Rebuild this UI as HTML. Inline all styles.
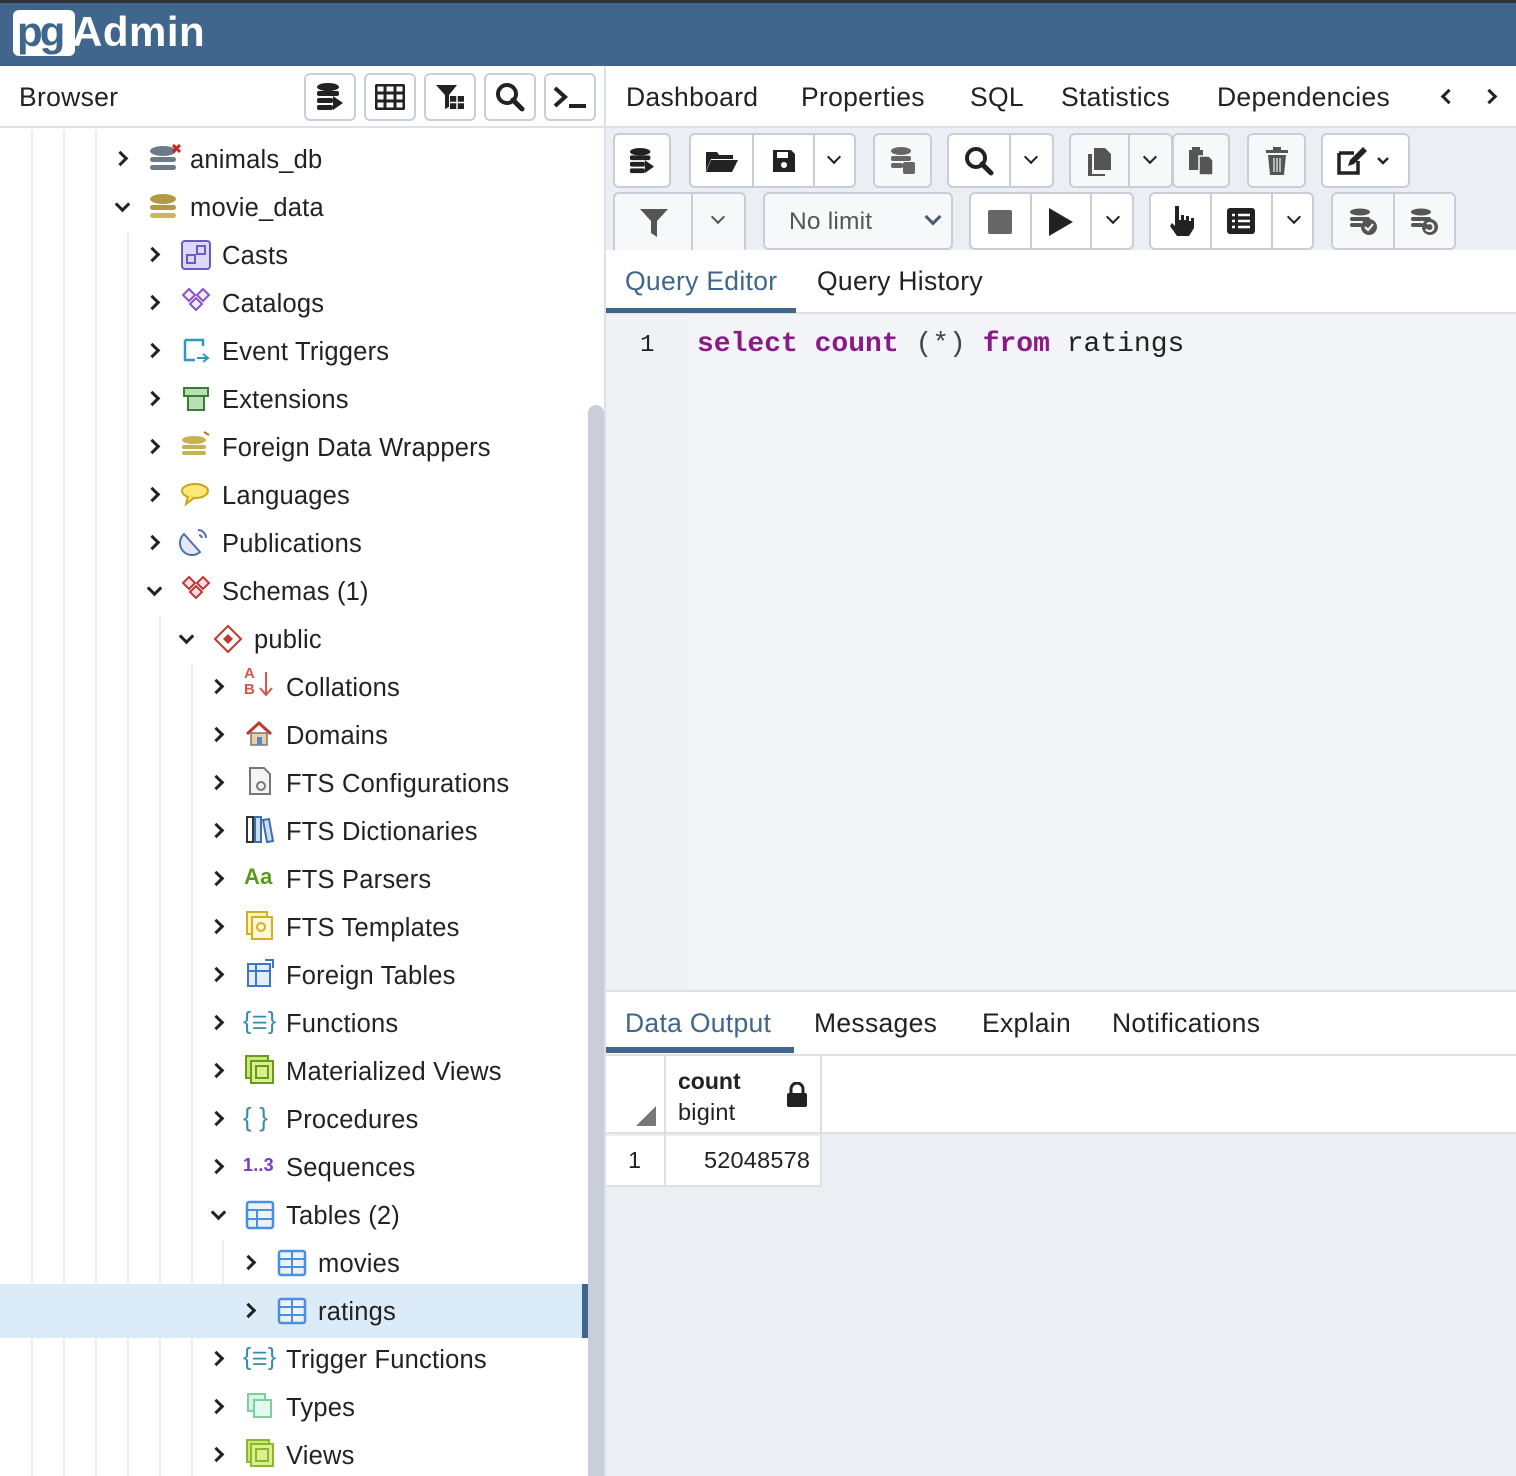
<!DOCTYPE html>
<html><head><meta charset="utf-8"><style>
*{box-sizing:border-box;margin:0;padding:0}
body{width:1516px;height:1476px;overflow:hidden;background:#fff;font-family:"Liberation Sans",sans-serif;color:#222;position:relative}
.a{position:absolute}
.t{position:absolute;font-size:25.5px;letter-spacing:0.2px;white-space:nowrap;line-height:30px}
.tb{font-size:26.5px;letter-spacing:0.3px}
.b{position:absolute;border:2px solid #c8cdd7;border-radius:6px;background:#fff;display:flex;align-items:center;justify-content:center}
.d{background:#f7f8fa}
.g{position:absolute;width:2px;background:#eceef2}
.ch{position:absolute;width:11px;height:11px;border-right:3px solid #222;border-bottom:3px solid #222}
.r{transform:rotate(-45deg)}
.dn{transform:rotate(45deg)}
.sep{position:absolute;top:0;bottom:0;width:2px;background:#c8cdd7}
.mono{font-family:"Liberation Mono",monospace}
</style></head><body>
<!-- header -->
<div class="a" style="left:0;top:0;width:1516px;height:3px;background:#333"></div>
<div class="a" style="left:0;top:3px;width:1516px;height:63px;background:#40668e"></div>
<div class="a" style="left:13px;top:10px;width:62px;height:46px;background:#fff;border-radius:6px"></div>
<div class="t" style="left:17px;top:9px;font-size:42px;line-height:46px;font-weight:bold;color:#40668e;letter-spacing:-3px">pg</div>
<div class="t" style="left:72px;top:9px;font-size:42px;line-height:46px;font-weight:bold;color:#fff;letter-spacing:0.5px">Admin</div>

<!-- browser bar -->
<div class="a" style="left:0;top:66px;width:604px;height:62px;background:#fff;border-bottom:2px solid #dde0e6"></div>
<div class="t tb" style="left:19px;top:82px">Browser</div>
<div class="b" style="left:304px;top:73px;width:52px;height:48px"><svg width="28" height="30" viewBox="0 0 28 30"><ellipse cx="12" cy="5" rx="11" ry="4" fill="#222"/><rect x="1" y="9" width="22" height="5" rx="2" fill="#222"/><rect x="1" y="16" width="16" height="5" rx="2" fill="#222"/><rect x="1" y="23" width="16" height="5" rx="2" fill="#222"/><path d="M17 14 L27 21 L17 28Z" fill="#222"/></svg></div>
<div class="b" style="left:364px;top:73px;width:52px;height:48px"><svg width="30" height="26" viewBox="0 0 30 26"><rect x="1" y="1" width="28" height="24" rx="2" fill="none" stroke="#222" stroke-width="3"/><path d="M1 9H29M1 17H29M10 1V25M20 1V25" stroke="#222" stroke-width="3"/></svg></div>
<div class="b" style="left:424px;top:73px;width:52px;height:48px"><svg width="30" height="28" viewBox="0 0 30 28"><path d="M1 2H22L14 12V24L10 26V12Z" fill="#222"/><rect x="15" y="13" width="14" height="13" fill="#222"/><path d="M15 19.5H29M22 13V26" stroke="#fff" stroke-width="1.5"/></svg></div>
<div class="b" style="left:484px;top:73px;width:52px;height:48px"><svg width="30" height="30" viewBox="0 0 30 30"><circle cx="12" cy="12" r="9" fill="none" stroke="#222" stroke-width="4"/><path d="M18 18L27 27" stroke="#222" stroke-width="5" stroke-linecap="round"/></svg></div>
<div class="b" style="left:544px;top:73px;width:52px;height:48px"><svg width="36" height="24" viewBox="0 0 36 24"><path d="M3 3L13 12L3 21" fill="none" stroke="#222" stroke-width="4"/><path d="M17 21H34" stroke="#222" stroke-width="4"/></svg></div>

<!-- tree guides -->
<div class="g" style="left:31px;top:130px;height:1346px"></div>
<div class="g" style="left:63px;top:130px;height:1346px"></div>
<div class="g" style="left:95px;top:130px;height:1346px"></div>
<div class="g" style="left:127px;top:232px;height:1244px"></div>
<div class="g" style="left:159px;top:616px;height:860px"></div>
<div class="g" style="left:191px;top:664px;height:812px"></div>
<div class="g" style="left:222px;top:1240px;height:96px"></div>
<!-- selected -->
<div class="a" style="left:0;top:1284px;width:588px;height:54px;background:#dbecf8"></div>
<div class="a" style="left:582px;top:1284px;width:6px;height:54px;background:#40668e"></div>
<!-- scrollbar -->
<div class="a" style="left:588px;top:128px;width:17px;height:1348px;background:#fff"></div>
<div class="a" style="left:588px;top:405px;width:16px;height:1071px;background:#c9ced8;border-radius:8px 8px 0 0"></div>
<div class="a" style="left:604px;top:66px;width:2px;height:1410px;background:#dde0e6"></div>

<!-- tree rows -->
<div class="ch r" style="left:115px;top:153px"></div>
<svg class="a" style="left:148px;top:144px" width="34" height="30"><ellipse cx="15" cy="7" rx="13" ry="5" fill="#6c7a8a"/><rect x="2" y="13" width="26" height="5" rx="2.5" fill="#6c7a8a"/><rect x="2" y="21" width="26" height="5" rx="2.5" fill="#6c7a8a"/><path d="M25 1L32 8M32 1L25 8" stroke="#d0221c" stroke-width="3"/></svg>
<div class="t" style="left:190px;top:145px">animals_db</div>
<div class="ch dn" style="left:117px;top:199px"></div>
<svg class="a" style="left:148px;top:192px" width="32" height="30"><ellipse cx="15" cy="7" rx="13" ry="5" fill="#b09a44"/><rect x="2" y="13" width="26" height="5" rx="2.5" fill="#b09a44"/><rect x="2" y="21" width="26" height="5" rx="2.5" fill="#c9b860"/></svg>
<div class="t" style="left:190px;top:193px">movie_data</div>

<div class="ch r" style="left:147px;top:249px"></div>
<svg class="a" style="left:181px;top:240px" width="30" height="30"><rect x="1" y="1" width="28" height="28" rx="3" fill="#dcd9f8" stroke="#6a5ac8" stroke-width="2"/><rect x="6" y="15" width="8" height="8" fill="none" stroke="#6a5ac8" stroke-width="2"/><rect x="16" y="6" width="8" height="8" fill="none" stroke="#6a5ac8" stroke-width="2"/></svg>
<div class="t" style="left:222px;top:241px">Casts</div>

<div class="ch r" style="left:147px;top:297px"></div>
<svg class="a" style="left:180px;top:287px" width="32" height="30"><g fill="#eee" stroke="#8b4fd0" stroke-width="2"><path d="M9 2L15 8L9 14L3 8Z"/><path d="M23 2L29 8L23 14L17 8Z"/><path d="M16 11L22 17L16 23L10 17Z"/></g></svg>
<div class="t" style="left:222px;top:289px">Catalogs</div>

<div class="ch r" style="left:147px;top:345px"></div>
<svg class="a" style="left:181px;top:336px" width="30" height="30"><path d="M4 4H22V10M4 4V24H14" fill="none" stroke="#2e9bb8" stroke-width="2.5"/><path d="M16 22H26M22 18L27 22L22 26" fill="none" stroke="#2e9bb8" stroke-width="2"/></svg>
<div class="t" style="left:222px;top:337px">Event Triggers</div>

<div class="ch r" style="left:147px;top:393px"></div>
<svg class="a" style="left:181px;top:384px" width="30" height="30"><rect x="3" y="4" width="24" height="8" fill="#b8e0b0" stroke="#3a7d3a" stroke-width="2"/><rect x="7" y="12" width="16" height="14" fill="#b8e0b0" stroke="#3a7d3a" stroke-width="2"/></svg>
<div class="t" style="left:222px;top:385px">Extensions</div>

<div class="ch r" style="left:147px;top:441px"></div>
<svg class="a" style="left:180px;top:430px" width="32" height="32"><ellipse cx="14" cy="10" rx="12" ry="4" fill="#c7b250"/><rect x="2" y="15" width="24" height="4" rx="2" fill="#c7b250"/><rect x="2" y="21" width="24" height="4" rx="2" fill="#c7b250"/><path d="M24 2L29 5" stroke="#c07020" stroke-width="2"/></svg>
<div class="t" style="left:222px;top:433px">Foreign Data Wrappers</div>

<div class="ch r" style="left:147px;top:489px"></div>
<svg class="a" style="left:180px;top:480px" width="32" height="30"><ellipse cx="15" cy="11" rx="13" ry="7" fill="#fbe878" stroke="#c9a514" stroke-width="2"/><path d="M8 16L6 24L14 18" fill="#fbe878" stroke="#c9a514" stroke-width="2"/></svg>
<div class="t" style="left:222px;top:481px">Languages</div>

<div class="ch r" style="left:147px;top:537px"></div>
<svg class="a" style="left:178px;top:526px" width="34" height="32"><path d="M6 8A12 12 0 0 0 22 26Z" fill="#e3e8f4" stroke="#5070a8" stroke-width="2"/><path d="M20 4A8 8 0 0 1 28 12M21 9A4 4 0 0 1 24 12" fill="none" stroke="#5070a8" stroke-width="2"/></svg>
<div class="t" style="left:222px;top:529px">Publications</div>

<div class="ch dn" style="left:149px;top:583px"></div>
<svg class="a" style="left:180px;top:575px" width="32" height="30"><g fill="#fde" stroke="#c0392b" stroke-width="2"><path d="M9 2L15 8L9 14L3 8Z"/><path d="M23 2L29 8L23 14L17 8Z"/><path d="M16 11L22 17L16 23L10 17Z"/></g></svg>
<div class="t" style="left:222px;top:577px">Schemas (1)</div>

<div class="ch dn" style="left:181px;top:631px"></div>
<svg class="a" style="left:213px;top:624px" width="30" height="30"><path d="M15 2L28 15L15 28L2 15Z" fill="#fff" stroke="#c0392b" stroke-width="2"/><path d="M15 10L20 15L15 20L10 15Z" fill="#c0392b"/></svg>
<div class="t" style="left:254px;top:625px">public</div>

<div class="ch r" style="left:211px;top:681px"></div>
<div class="t" style="left:244px;top:666px;font-size:15px;line-height:16px;color:#d9534f;font-weight:bold">A<br>B</div>
<svg class="a" style="left:258px;top:670px" width="16" height="30"><path d="M8 2V24M2 18L8 25L14 18" fill="none" stroke="#d9534f" stroke-width="2"/></svg>
<div class="t" style="left:286px;top:673px">Collations</div>

<div class="ch r" style="left:211px;top:729px"></div>
<svg class="a" style="left:244px;top:720px" width="32" height="30"><path d="M3 14L15 3L27 14" fill="none" stroke="#c0392b" stroke-width="3"/><rect x="7" y="13" width="16" height="12" fill="#e8d0a0" stroke="#777" stroke-width="1.5"/><rect x="13" y="17" width="5" height="8" fill="#5a86c8"/></svg>
<div class="t" style="left:286px;top:721px">Domains</div>

<div class="ch r" style="left:211px;top:777px"></div>
<svg class="a" style="left:246px;top:766px" width="30" height="32"><path d="M4 2H18L24 8V28H4Z" fill="#f4f4f4" stroke="#777" stroke-width="2"/><circle cx="15" cy="20" r="4" fill="none" stroke="#777" stroke-width="2"/></svg>
<div class="t" style="left:286px;top:769px">FTS Configurations</div>

<div class="ch r" style="left:211px;top:825px"></div>
<svg class="a" style="left:245px;top:814px" width="30" height="32"><rect x="2" y="3" width="6" height="25" fill="#fff" stroke="#333" stroke-width="2"/><rect x="10" y="3" width="6" height="25" fill="#cde" stroke="#3a70b0" stroke-width="2"/><path d="M18 6L24 5L28 27L22 28Z" fill="#cde" stroke="#3a70b0" stroke-width="2"/></svg>
<div class="t" style="left:286px;top:817px">FTS Dictionaries</div>

<div class="ch r" style="left:211px;top:873px"></div>
<div class="t" style="left:244px;top:862px;font-size:22px;color:#5a9a1a;font-weight:bold">Aa</div>
<div class="t" style="left:286px;top:865px">FTS Parsers</div>

<div class="ch r" style="left:211px;top:921px"></div>
<svg class="a" style="left:245px;top:910px" width="30" height="32"><rect x="2" y="2" width="20" height="22" fill="#fff3c0" stroke="#d4b020" stroke-width="2"/><rect x="7" y="7" width="20" height="22" fill="#fff8d8" stroke="#d4b020" stroke-width="2"/><circle cx="16" cy="17" r="4" fill="none" stroke="#d4b020" stroke-width="2"/></svg>
<div class="t" style="left:286px;top:913px">FTS Templates</div>

<div class="ch r" style="left:211px;top:969px"></div>
<svg class="a" style="left:245px;top:958px" width="30" height="32"><rect x="3" y="6" width="22" height="22" fill="#e4eefa" stroke="#3a78c8" stroke-width="2"/><path d="M3 13H25M11 6V28" stroke="#3a78c8" stroke-width="2"/><path d="M20 2H28V10" fill="none" stroke="#3a78c8" stroke-width="2"/></svg>
<div class="t" style="left:286px;top:961px">Foreign Tables</div>

<div class="ch r" style="left:211px;top:1017px"></div>
<div class="t" style="left:243px;top:1006px;font-size:25px;color:#3a8ab0">{<span style="font-size:18px">☰</span>}</div>
<div class="t" style="left:286px;top:1009px">Functions</div>

<div class="ch r" style="left:211px;top:1065px"></div>
<svg class="a" style="left:244px;top:1054px" width="32" height="32"><rect x="2" y="2" width="22" height="22" fill="#c8e878" stroke="#6a9a1a" stroke-width="2"/><rect x="7" y="7" width="22" height="22" fill="#d8f090" stroke="#6a9a1a" stroke-width="2"/><rect x="12" y="12" width="12" height="12" fill="none" stroke="#6a9a1a" stroke-width="2"/></svg>
<div class="t" style="left:286px;top:1057px">Materialized Views</div>

<div class="ch r" style="left:211px;top:1113px"></div>
<div class="t" style="left:243px;top:1102px;font-size:26px;color:#3a8ab0">{ }</div>
<div class="t" style="left:286px;top:1105px">Procedures</div>

<div class="ch r" style="left:211px;top:1161px"></div>
<div class="t" style="left:243px;top:1150px;font-size:18px;color:#7a3ac8;font-weight:bold">1..3</div>
<div class="t" style="left:286px;top:1153px">Sequences</div>

<div class="ch dn" style="left:213px;top:1207px"></div>
<svg class="a" style="left:245px;top:1200px" width="30" height="30"><rect x="2" y="2" width="26" height="26" rx="2" fill="#eef1f5" stroke="#4a90e2" stroke-width="2.5"/><path d="M2 10H28M2 19H28M12 10V28" stroke="#4a90e2" stroke-width="2"/></svg>
<div class="t" style="left:286px;top:1201px">Tables (2)</div>

<div class="ch r" style="left:243px;top:1257px"></div>
<svg class="a" style="left:277px;top:1249px" width="30" height="28"><rect x="2" y="2" width="26" height="24" rx="2" fill="#eef1f5" stroke="#4a90e2" stroke-width="2.5"/><path d="M2 10H28M2 18H28M15 2V26" stroke="#4a90e2" stroke-width="2"/></svg>
<div class="t" style="left:318px;top:1249px">movies</div>

<div class="ch r" style="left:243px;top:1305px"></div>
<svg class="a" style="left:277px;top:1297px" width="30" height="28"><rect x="2" y="2" width="26" height="24" rx="2" fill="#eef1f5" stroke="#4a90e2" stroke-width="2.5"/><path d="M2 10H28M2 18H28M15 2V26" stroke="#4a90e2" stroke-width="2"/></svg>
<div class="t" style="left:318px;top:1297px">ratings</div>

<div class="ch r" style="left:211px;top:1353px"></div>
<div class="t" style="left:243px;top:1342px;font-size:25px;color:#3a8ab0">{<span style="font-size:18px">☰</span>}</div>
<div class="t" style="left:286px;top:1345px">Trigger Functions</div>

<div class="ch r" style="left:211px;top:1401px"></div>
<svg class="a" style="left:246px;top:1392px" width="28" height="28"><rect x="2" y="2" width="17" height="17" fill="#d8f5e4" stroke="#7ad0a0" stroke-width="2"/><rect x="8" y="8" width="17" height="17" fill="#e0faec" stroke="#7ad0a0" stroke-width="2"/></svg>
<div class="t" style="left:286px;top:1393px">Types</div>

<div class="ch r" style="left:211px;top:1449px"></div>
<svg class="a" style="left:245px;top:1438px" width="30" height="32"><rect x="2" y="2" width="22" height="22" fill="#c8e878" stroke="#8ab82a" stroke-width="2"/><rect x="6" y="6" width="22" height="22" fill="#d8f090" stroke="#8ab82a" stroke-width="2"/><rect x="11" y="11" width="12" height="12" fill="none" stroke="#8ab82a" stroke-width="2"/></svg>
<div class="t" style="left:286px;top:1441px">Views</div>

<!-- right tabs -->
<div class="a" style="left:606px;top:66px;width:910px;height:62px;background:#fff;border-bottom:2px solid #dde0e6"></div>
<div class="t tb" style="left:626px;top:82px">Dashboard</div>
<div class="t tb" style="left:801px;top:82px">Properties</div>
<div class="t tb" style="left:970px;top:82px">SQL</div>
<div class="t tb" style="left:1061px;top:82px">Statistics</div>
<div class="t tb" style="left:1217px;top:82px">Dependencies</div>
<div class="ch" style="left:1443px;top:91px;transform:rotate(135deg)"></div>
<div class="ch r" style="left:1484px;top:91px"></div>

<!-- toolbar -->
<div class="a" style="left:606px;top:128px;width:910px;height:122px;background:#ebeef3"></div>
<div class="b" style="left:613px;top:133px;width:58px;height:55px"><svg width="26" height="28" viewBox="0 0 28 30"><ellipse cx="12" cy="5" rx="11" ry="4" fill="#222"/><rect x="1" y="9" width="22" height="5" rx="2" fill="#222"/><rect x="1" y="16" width="16" height="5" rx="2" fill="#222"/><rect x="1" y="23" width="16" height="5" rx="2" fill="#222"/><path d="M17 14L27 21L17 28Z" fill="#222"/></svg></div>
<div class="b" style="left:689px;top:133px;width:167px;height:55px">
 <div class="sep" style="left:61px"></div><div class="sep" style="left:122px"></div>
 <svg class="a" style="left:14px;top:14px" width="34" height="24"><path d="M1 3H12L14 6H28V10H6L1 22Z" fill="#222"/><path d="M6 11H33L27 23H1Z" fill="#222"/></svg>
 <svg class="a" style="left:80px;top:13px" width="26" height="26"><path d="M2 2H20L24 6V24H2Z" fill="#222"/><rect x="6" y="4" width="11" height="6" fill="#fff"/><circle cx="13" cy="17" r="3" fill="#fff"/></svg>
 <div class="ch dn" style="left:138px;top:17px;width:10px;height:10px;border-width:2.5px"></div>
</div>
<div class="b d" style="left:873px;top:133px;width:59px;height:55px"><svg width="26" height="30" viewBox="0 0 26 30"><ellipse cx="11" cy="5" rx="10" ry="4" fill="#666"/><rect x="1" y="10" width="20" height="5" rx="2" fill="#666"/><rect x="1" y="17" width="12" height="5" rx="2" fill="#666"/><rect x="13" y="16" width="12" height="12" rx="2" fill="#666"/></svg></div>
<div class="b" style="left:947px;top:133px;width:107px;height:55px">
 <div class="sep" style="left:60px"></div>
 <svg class="a" style="left:15px;top:11px" width="32" height="32"><circle cx="12" cy="12" r="9" fill="none" stroke="#222" stroke-width="4"/><path d="M18 18L27 27" stroke="#222" stroke-width="5" stroke-linecap="round"/></svg>
 <div class="ch dn" style="left:77px;top:17px;width:10px;height:10px;border-width:2.5px"></div>
</div>
<div class="b d" style="left:1069px;top:133px;width:104px;height:55px">
 <div class="sep" style="left:57px"></div>
 <svg class="a" style="left:14px;top:11px" width="28" height="32"><path d="M9 2H20L26 8V24H9Z" fill="#555"/><path d="M3 8H7V28H20V30H3Z" fill="#555"/></svg>
 <div class="ch dn" style="left:74px;top:17px;width:10px;height:10px;border-width:2.5px"></div>
</div>
<div class="b d" style="left:1172px;top:133px;width:58px;height:55px"><svg width="28" height="30"><rect x="2" y="4" width="14" height="20" fill="#555"/><rect x="5" y="1" width="8" height="5" fill="#555"/><path d="M12 10H22L26 14V29H12Z" fill="#555" stroke="#f7f8fa" stroke-width="1.5"/></svg></div>
<div class="b d" style="left:1247px;top:133px;width:59px;height:55px"><svg width="24" height="30"><rect x="1" y="4" width="22" height="3" fill="#555"/><rect x="8" y="1" width="8" height="3" fill="#555"/><path d="M3 9H21L19 29H5Z" fill="#555"/><path d="M9 12V26M12 12V26M15 12V26" stroke="#f7f8fa" stroke-width="1.2"/></svg></div>
<div class="b" style="left:1321px;top:133px;width:89px;height:55px"><svg width="60" height="30"><path d="M3 7H18M3 7V27H22V15" fill="none" stroke="#222" stroke-width="3.5"/><path d="M12 20L14 14L27 1L31 5L18 18Z" fill="#222"/><path d="M42 12L47 17L52 12" fill="none" stroke="#222" stroke-width="2.5"/></svg></div>

<div class="b d" style="left:613px;top:192px;width:133px;height:60px;border-bottom:none;border-radius:6px 6px 0 0">
 <div class="sep" style="left:76px"></div>
 <svg class="a" style="left:24px;top:14px" width="30" height="30"><path d="M1 1H29L18 13V29L12 25V13Z" fill="#555"/></svg>
 <div class="ch dn" style="left:98px;top:18px;width:10px;height:10px;border-width:2.5px;border-color:#555"></div>
</div>
<div class="b d" style="left:763px;top:192px;width:190px;height:58px;justify-content:flex-start">
 <div class="t" style="left:24px;top:13px;color:#555;font-size:24.5px">No limit</div>
 <div class="ch dn" style="left:162px;top:17px;width:12px;height:12px;border-width:3px;border-color:#4a5a70"></div>
</div>
<div class="b" style="left:969px;top:192px;width:165px;height:58px">
 <div class="sep" style="left:59px"></div><div class="sep" style="left:119px"></div>
 <div class="a" style="left:17px;top:16px;width:24px;height:24px;background:#666;border-radius:2px"></div>
 <svg class="a" style="left:77px;top:13px" width="26" height="30"><path d="M1 1L25 15L1 29Z" fill="#222"/></svg>
 <div class="ch dn" style="left:137px;top:18px;width:10px;height:10px;border-width:2.5px"></div>
</div>
<div class="b" style="left:1149px;top:192px;width:165px;height:58px">
 <div class="sep" style="left:59px"></div><div class="sep" style="left:120px"></div>
 <svg class="a" style="left:16px;top:10px" width="28" height="34"><path d="M8 2H12V16H14V11H17V16H19V12H22V17H24V14H27V24L22 32H10L3 22L5 19L8 22Z" fill="#222"/></svg>
 <svg class="a" style="left:75px;top:13px" width="30" height="28"><rect x="1" y="1" width="28" height="26" rx="3" fill="#222"/><path d="M6 8H9M6 14H9M6 20H9M12 8H24M12 14H24M12 20H24" stroke="#fff" stroke-width="2.5"/></svg>
 <div class="ch dn" style="left:138px;top:18px;width:10px;height:10px;border-width:2.5px"></div>
</div>
<div class="b d" style="left:1331px;top:192px;width:125px;height:58px">
 <div class="sep" style="left:60px"></div>
 <svg class="a" style="left:16px;top:14px" width="30" height="30"><ellipse cx="11" cy="4" rx="10" ry="3.5" fill="#555"/><rect x="1" y="9" width="20" height="4" rx="2" fill="#555"/><rect x="1" y="15" width="12" height="4" rx="2" fill="#555"/><circle cx="20" cy="19" r="8" fill="#555"/><path d="M16 19L19 22L24 16" fill="none" stroke="#fff" stroke-width="2"/></svg>
 <svg class="a" style="left:77px;top:14px" width="30" height="30"><ellipse cx="11" cy="4" rx="10" ry="3.5" fill="#555"/><rect x="1" y="9" width="20" height="4" rx="2" fill="#555"/><rect x="1" y="15" width="12" height="4" rx="2" fill="#555"/><circle cx="20" cy="19" r="8" fill="#555"/><path d="M17 16A4 4 0 1 1 16 21" fill="none" stroke="#fff" stroke-width="2"/></svg>
</div>

<!-- query tabs -->
<div class="a" style="left:606px;top:250px;width:910px;height:64px;background:#fff;border-bottom:2px solid #dde0e6"></div>
<div class="t tb" style="left:625px;top:266px;color:#40668e">Query Editor</div>
<div class="a" style="left:606px;top:308px;width:190px;height:5px;background:#40668e"></div>
<div class="t tb" style="left:817px;top:266px">Query History</div>

<!-- editor -->
<div class="a" style="left:606px;top:314px;width:82px;height:676px;background:#f0f1f4"></div>
<div class="a" style="left:688px;top:314px;width:828px;height:676px;background:#f3f4f7"></div>
<div class="t mono" style="left:640px;top:331px;font-size:24px">1</div>
<div class="t mono" style="left:697px;top:330px;font-size:28px;letter-spacing:0"><span style="color:#8b1a89;font-weight:bold">select count</span> <span style="color:#444">(*)</span> <span style="color:#8b1a89;font-weight:bold">from</span> ratings</div>

<!-- output tabs -->
<div class="a" style="left:606px;top:990px;width:910px;height:66px;background:#fff;border-top:2px solid #dde0e6;border-bottom:2px solid #dde0e6"></div>
<div class="t tb" style="left:625px;top:1008px;color:#40668e">Data Output</div>
<div class="a" style="left:606px;top:1047px;width:188px;height:6px;background:#40668e"></div>
<div class="t tb" style="left:814px;top:1008px">Messages</div>
<div class="t tb" style="left:982px;top:1008px">Explain</div>
<div class="t tb" style="left:1112px;top:1008px">Notifications</div>

<!-- grid -->
<div class="a" style="left:606px;top:1056px;width:910px;height:420px;background:#ebeef3"></div>
<div class="a" style="left:606px;top:1056px;width:910px;height:78px;background:#fff;border-bottom:2px solid #dde0e6"></div>
<div class="a" style="left:664px;top:1056px;width:2px;height:130px;background:#dde0e6"></div>
<div class="a" style="left:820px;top:1056px;width:2px;height:130px;background:#dde0e6"></div>
<svg class="a" style="left:636px;top:1106px" width="20" height="20"><path d="M20 0V20H0Z" fill="#777"/></svg>
<div class="t" style="left:678px;top:1066px;font-size:23px;font-weight:bold;letter-spacing:0">count</div>
<div class="t" style="left:678px;top:1097px;font-size:23.5px">bigint</div>
<svg class="a" style="left:786px;top:1082px" width="22" height="26"><path d="M5 11V7A6 6 0 0 1 17 7V11" fill="none" stroke="#222" stroke-width="3"/><rect x="1" y="11" width="20" height="14" rx="2" fill="#222"/></svg>
<div class="a" style="left:606px;top:1136px;width:58px;height:50px;background:#fff"></div>
<div class="a" style="left:666px;top:1136px;width:154px;height:50px;background:#fff"></div>
<div class="a" style="left:606px;top:1185px;width:216px;height:2px;background:#dde0e6"></div>
<div class="t" style="left:628px;top:1145px;font-size:23.5px">1</div>
<div class="t" style="left:704px;top:1145px;font-size:23.5px">52048578</div>
</body></html>
